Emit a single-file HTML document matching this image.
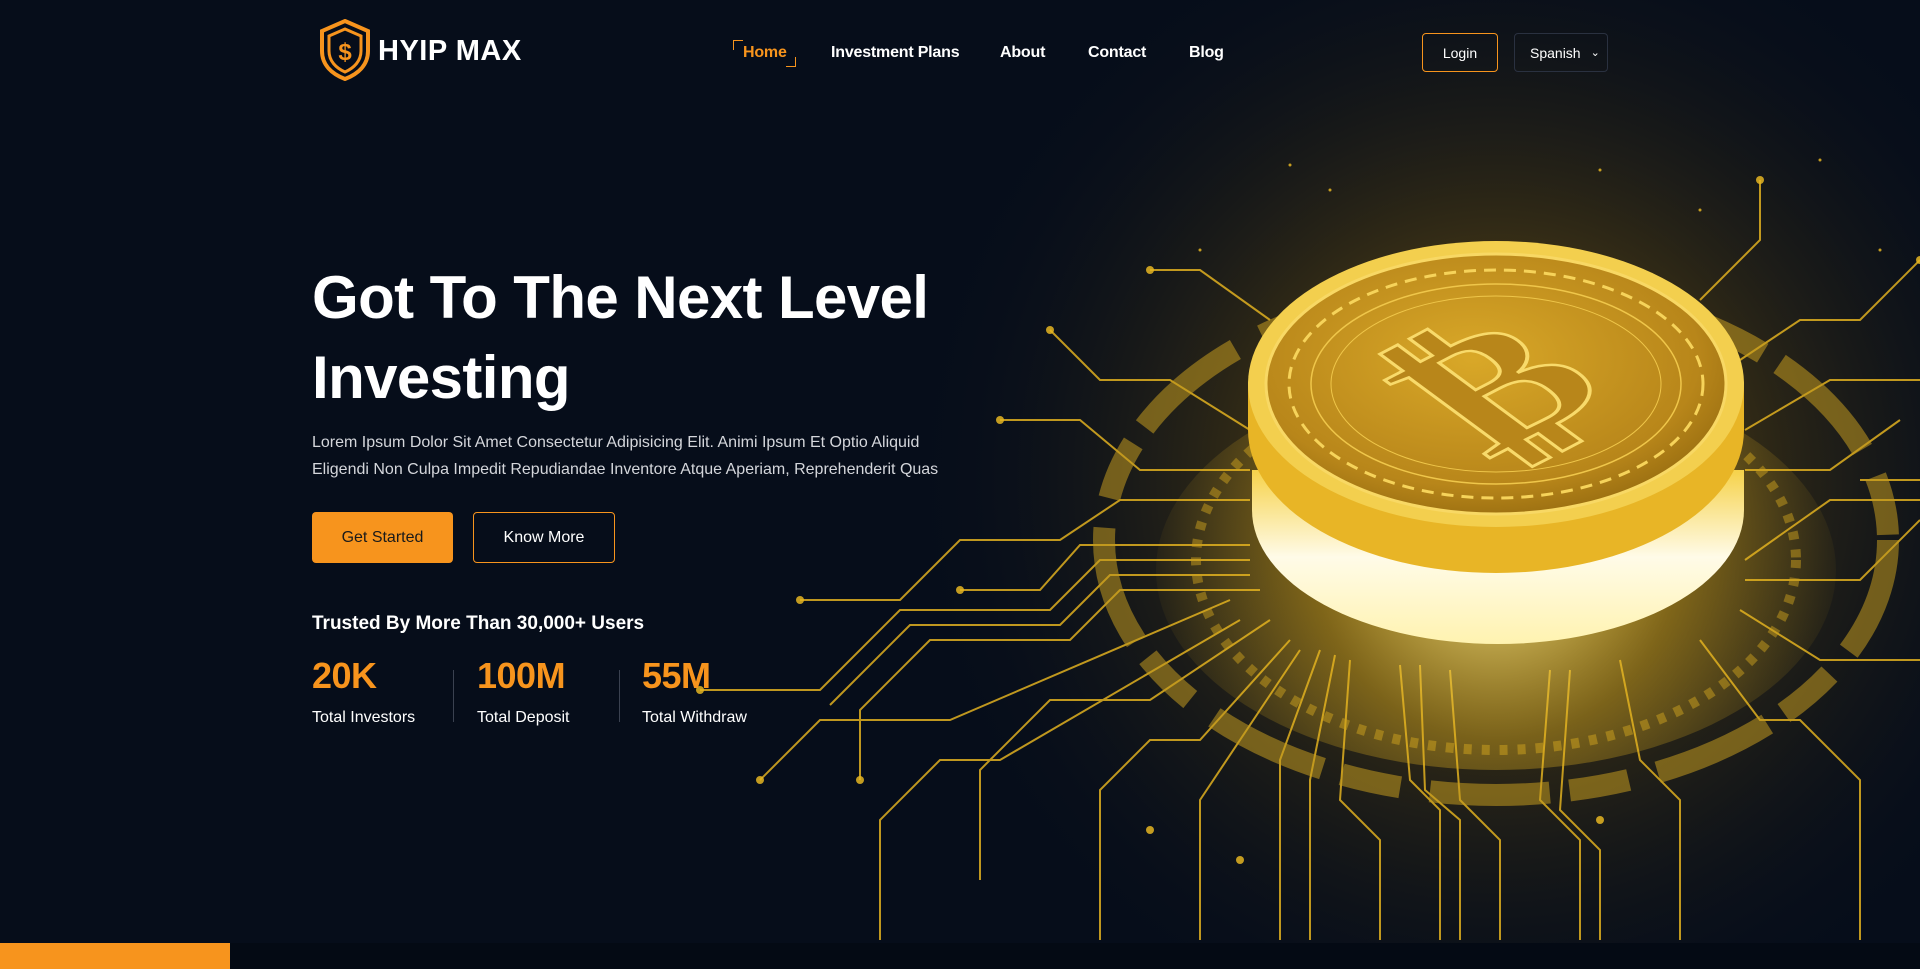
<!DOCTYPE html>
<html><head><meta charset="utf-8"><style>
*{margin:0;padding:0;box-sizing:border-box}
body{width:1920px;height:969px;overflow:hidden;background:#060d1a;font-family:"Liberation Sans",Arial,sans-serif;color:#fff;position:relative}
.abs{position:absolute}
.nav a{position:absolute;top:44px;font-size:16px;font-weight:bold;color:#fff;text-decoration:none;letter-spacing:-0.2px}
h1{position:absolute;left:312px;top:258px;font-size:60px;line-height:80px;font-weight:bold;letter-spacing:-0.6px;width:700px}
p.lead{position:absolute;left:312px;top:429px;font-size:16px;line-height:27px;color:#d4d6db;width:700px}
.btn{position:absolute;top:512px;height:51px;border-radius:4px;font-size:16px;display:flex;align-items:center;justify-content:center}
.num{position:absolute;top:655px;font-size:36px;font-weight:bold;color:#f7941d;letter-spacing:-0.5px}
.lab{position:absolute;top:709px;font-size:16px;color:#fff}
.div{position:absolute;top:670px;width:1px;height:52px;background:#3a4150}
</style></head><body>
<svg class="abs" style="left:0;top:0" width="1920" height="969" viewBox="0 0 1920 969">
<defs>
<radialGradient id="g1" cx="1496" cy="480" r="600" gradientUnits="userSpaceOnUse">
<stop offset="0" stop-color="#c9950f" stop-opacity=".8"/><stop offset=".35" stop-color="#6a5010" stop-opacity=".55"/><stop offset="1" stop-color="#060d1a" stop-opacity="0"/></radialGradient>
<radialGradient id="face" cx="0.45" cy="0.4" r="0.7"><stop offset="0" stop-color="#d9a828"/><stop offset=".7" stop-color="#b8861a"/><stop offset="1" stop-color="#8a620c"/></radialGradient>
<linearGradient id="band" x1="0" y1="0" x2="0" y2="1"><stop offset="0" stop-color="#f6d24a"/><stop offset=".5" stop-color="#fffbe8"/><stop offset="1" stop-color="#fff3b0"/></linearGradient>
<radialGradient id="bglow" cx="1496" cy="560" r="360" gradientUnits="userSpaceOnUse"><stop offset="0" stop-color="#fff3a0" stop-opacity=".85"/><stop offset=".5" stop-color="#e6b520" stop-opacity=".4"/><stop offset="1" stop-color="#e6b520" stop-opacity="0"/></radialGradient>
</defs>
<rect width="1920" height="969" fill="#060d1a"/>
<rect x="0" y="0" width="1920" height="969" fill="url(#g1)"/>
<g fill="none" stroke="#e0b020" stroke-width="2" opacity=".85">
<ellipse cx="1496" cy="540" rx="392" ry="255" stroke-width="22" stroke-dasharray="120 30 60 20" opacity=".55"/>
<ellipse cx="1496" cy="560" rx="300" ry="190" stroke-width="10" stroke-dasharray="8 10" opacity=".5"/>
<path d="M1250 560 L1100 560 L1050 610 L900 610 L820 690 L700 690"/>
<path d="M1250 575 L1110 575 L1060 625 L910 625 L830 705"/>
<path d="M1260 590 L1120 590 L1070 640 L930 640 L860 710 L860 780"/>
<path d="M1270 620 L1150 700 L1050 700 L980 770 L980 880"/>
<path d="M1290 640 L1200 740 L1150 740 L1100 790 L1100 940"/>
<path d="M1320 650 L1280 760 L1280 940"/>
<path d="M1335 655 L1310 780 L1310 940"/>
<path d="M1350 660 L1340 800 L1380 840 L1380 940"/>
<path d="M1400 665 L1410 780 L1440 810 L1440 940"/>
<path d="M1420 665 L1425 790 L1460 820 L1460 940"/>
<path d="M1450 670 L1460 800 L1500 840 L1500 940"/>
<path d="M1550 670 L1540 800 L1580 840 L1580 940"/>
<path d="M1570 670 L1560 810 L1600 850 L1600 940"/>
<path d="M1620 660 L1640 760 L1680 800 L1680 940"/>
<path d="M1700 640 L1760 720 L1800 720 L1860 780 L1860 940"/>
<path d="M1740 610 L1820 660 L1920 660"/>
<path d="M1745 580 L1860 580 L1920 520"/>
<path d="M1745 560 L1830 500 L1920 500"/>
<path d="M1745 430 L1830 380 L1920 380"/>
<path d="M1740 360 L1800 320 L1860 320 L1920 260"/>
<path d="M1700 300 L1760 240 L1760 180"/>
<path d="M1250 430 L1170 380 L1100 380 L1050 330"/>
<path d="M1250 470 L1140 470 L1080 420 L1000 420"/>
<path d="M1250 500 L1120 500 L1060 540 L960 540 L900 600 L800 600"/>
<path d="M1270 320 L1200 270 L1150 270"/>
<path d="M1240 620 L1000 760 L940 760 L880 820 L880 940"/>
<path d="M1230 600 L950 720 L820 720 L760 780"/>
<path d="M1300 650 L1200 800 L1200 940"/>
<path d="M1250 545 L1080 545 L1040 590 L960 590"/>
<path d="M1860 480 L1920 480 M1745 470 L1830 470 L1900 420"/>
</g>
<g fill="#e5b522" opacity=".85">
<circle cx="1050" cy="330" r="4"/><circle cx="1000" cy="420" r="4"/><circle cx="800" cy="600" r="4"/><circle cx="700" cy="690" r="4"/><circle cx="860" cy="780" r="4"/><circle cx="760" cy="780" r="4"/><circle cx="1150" cy="270" r="4"/><circle cx="1760" cy="180" r="4"/><circle cx="1920" cy="260" r="4"/><circle cx="1600" cy="820" r="4"/><circle cx="1150" cy="830" r="4"/><circle cx="1240" cy="860" r="4"/><circle cx="960" cy="590" r="4"/>
<circle cx="1290" cy="165" r="1.5"/><circle cx="1330" cy="190" r="1.5"/><circle cx="1600" cy="170" r="1.5"/><circle cx="1700" cy="210" r="1.5"/><circle cx="1820" cy="160" r="1.5"/><circle cx="1880" cy="250" r="1.5"/><circle cx="1200" cy="250" r="1.5"/>
</g>
<ellipse cx="1496" cy="570" rx="340" ry="200" fill="url(#bglow)"/>
<path d="M1252 470 L1252 510 A246 134 0 0 0 1744 510 L1744 470 Z" fill="url(#band)"/>
<path d="M1248 384 L1248 430 A248 143 0 0 0 1744 430 L1744 384 Z" fill="#e8b526"/>
<ellipse cx="1496" cy="384" rx="248" ry="143" fill="#f3cf4e"/>
<ellipse cx="1496" cy="384" rx="230" ry="130" fill="url(#face)" stroke="#f8d864" stroke-width="3"/>
<ellipse cx="1496" cy="384" rx="207" ry="114" fill="none" stroke="#f6d35a" stroke-width="3" stroke-dasharray="12 8"/>
<ellipse cx="1496" cy="384" rx="185" ry="100" fill="none" stroke="#efc64a" stroke-width="1.5"/>
<ellipse cx="1496" cy="384" rx="165" ry="88" fill="none" stroke="#efc64a" stroke-width="1"/>
<g transform="translate(1496,386) scale(1,0.62) rotate(-40)">
<text x="0" y="85" text-anchor="middle" font-family="DejaVu Sans" font-weight="bold" font-size="250" fill="#b8861a" stroke="#f8da6a" stroke-width="4">₿</text>
</g>
</svg>
<div class="abs" style="left:0;top:943px;width:1920px;height:26px;background:#040a14"></div>
<div class="abs" style="left:0;top:943px;width:230px;height:26px;background:#f7941d"></div>

<svg class="abs" style="left:318px;top:19px" width="54" height="62" viewBox="0 0 54 62">
<path d="M27 2 L50 12 L50 32 C50 46 40 55 27 60 C14 55 4 46 4 32 L4 12 Z" fill="none" stroke="#f7941d" stroke-width="4"/>
<path d="M27 10 L43 17 L43 32 C43 42 36 49 27 53 C18 49 11 42 11 32 L11 17 Z" fill="none" stroke="#f7941d" stroke-width="3"/>
<text x="27" y="41" font-family="Liberation Sans" font-weight="bold" font-size="24" fill="#f7941d" text-anchor="middle">$</text>
</svg>
<div class="abs" style="left:378px;top:35px;font-size:29px;font-weight:bold;letter-spacing:0.5px">HYIP MAX</div>

<div class="nav">
<div class="abs" style="left:733px;top:40px;width:10px;height:10px;border-left:1.5px solid #f7941d;border-top:1.5px solid #f7941d"></div>
<div class="abs" style="left:786px;top:57px;width:10px;height:10px;border-right:1.5px solid #f7941d;border-bottom:1.5px solid #f7941d"></div>
<a style="left:743px;color:#f7941d">Home</a>
<a style="left:831px">Investment Plans</a>
<a style="left:1000px">About</a>
<a style="left:1088px">Contact</a>
<a style="left:1189px">Blog</a>
</div>
<div class="abs" style="left:1422px;top:33px;width:76px;height:39px;border:1px solid #f7941d;border-radius:4px;font-size:14px;display:flex;align-items:center;justify-content:center">Login</div>
<div class="abs" style="left:1514px;top:33px;width:94px;height:39px;border:1px solid #2a3140;border-radius:4px;font-size:14px;display:flex;align-items:center;padding-left:15px">Spanish <span style="font-size:11px;margin-left:10px">&#8964;</span></div>

<h1>Got To The Next Level Investing</h1>
<p class="lead">Lorem Ipsum Dolor Sit Amet Consectetur Adipisicing Elit. Animi Ipsum Et Optio Aliquid<br>Eligendi Non Culpa Impedit Repudiandae Inventore Atque Aperiam, Reprehenderit Quas</p>
<div class="btn" style="left:312px;width:141px;background:#f7941d;color:#1a1a1a">Get Started</div>
<div class="btn" style="left:473px;width:142px;border:1px solid #f7941d;color:#fff">Know More</div>
<div class="abs" style="left:312px;top:613px;font-size:19px;font-weight:bold">Trusted By More Than 30,000+ Users</div>
<div class="num" style="left:312px">20K</div><div class="lab" style="left:312px">Total Investors</div>
<div class="div" style="left:453px"></div>
<div class="num" style="left:477px">100M</div><div class="lab" style="left:477px">Total Deposit</div>
<div class="div" style="left:619px"></div>
<div class="num" style="left:642px">55M</div><div class="lab" style="left:642px">Total Withdraw</div>
</body></html>
